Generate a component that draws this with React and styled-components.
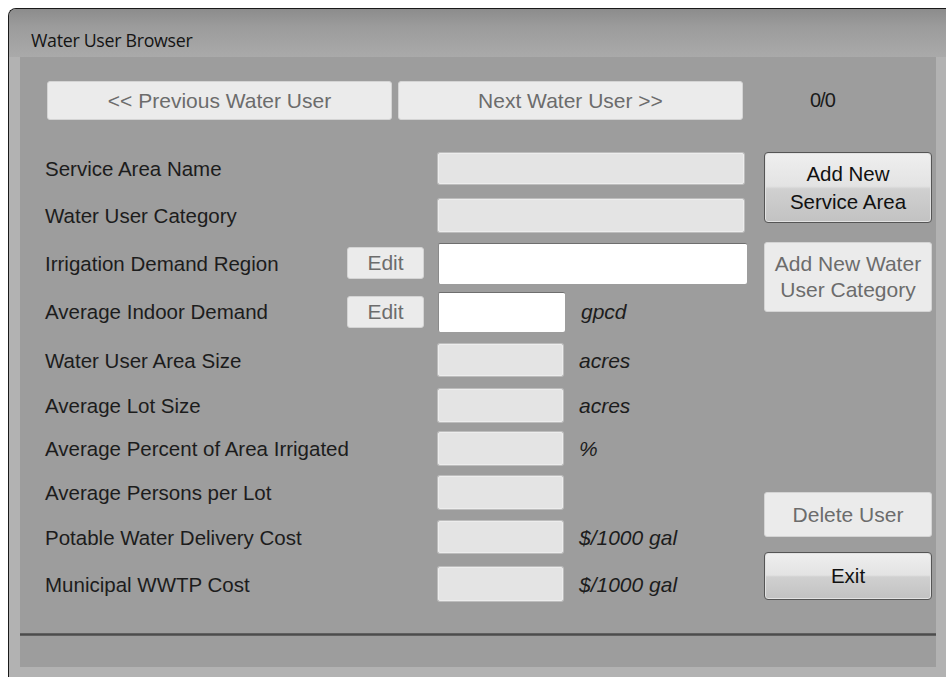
import React from "react";
import styled, { createGlobalStyle, css } from "styled-components";

const GlobalStyle = createGlobalStyle`
	html, body {
		margin: 0;
		padding: 0;
		background: #ffffff;
		overflow: hidden;
	}
	body {
		font-family: "Liberation Sans", Arial, sans-serif;
	}
`;

const Page = styled.div`
	padding: 8px 0 0 8px;
	height: 677px;
	box-sizing: border-box;
`;

// outer window chrome, cut off by the right and bottom edges
const Window = styled.div`
	width: 950px;
	height: 680px;
	box-sizing: border-box;
	border-top: 1px solid #1a1a1a;
	border-left: 1px solid #1a1a1a;
	border-top-left-radius: 8px;
	background: #b2b2b2;
	display: flex;
	flex-direction: column;
	overflow: hidden;
`;

const TitleBar = styled.div`
	height: 48px;
	flex-shrink: 0;
	display: flex;
	align-items: center;
	padding: 13px 0 0 22px;
	box-sizing: border-box;
	background: linear-gradient(#8c8c8c 0%, #9b9b9b 35%, #aaaaaa 100%);
	font-family: "Open Sans", "Noto Sans", sans-serif;
	font-size: 17.8px;
	color: #141414;
	letter-spacing: -0.3px;
`;

const Frame = styled.div`
	padding-left: 11px;
	display: flex;
	flex-direction: column;
`;

const Panel = styled.div`
	background: #9d9d9d;
	width: 916px;
	height: 610px;
	display: flex;
	flex-direction: column;
	padding: 24px 0 0 25px;
	box-sizing: border-box;
`;

const NavRow = styled.div`
	display: flex;
	align-items: center;
	margin-left: 2px;
	height: 39px;
`;

const buttonBase = css`
	box-sizing: border-box;
	font-family: "Liberation Sans", Arial, sans-serif;
	display: flex;
	align-items: center;
	justify-content: center;
	text-align: center;
	padding: 0;
`;

const FlatButton = styled.button`
	${buttonBase}
	width: ${(p) => p.$w}px;
	height: ${(p) => p.$h}px;
	font-size: 21px;
	line-height: 26px;
	background: #ebebeb;
	border: 1px solid #d4d4d4;
	border-radius: 3px;
	color: #6c6c6c;
	margin-right: ${(p) => p.$mr || 0}px;
`;

const RaisedButton = styled.button`
	${buttonBase}
	width: 168px;
	height: ${(p) => p.$h}px;
	font-size: 20.5px;
	line-height: 28px;
	border: 1px solid #555555;
	border-radius: 4px;
	color: #111111;
	background: linear-gradient(
		#efefef 0%,
		#e3e3e3 48%,
		#d0d0d0 52%,
		#c2c2c2 100%
	);
	box-shadow: inset 0 0 0 1px #e2e2e2;
`;

const Counter = styled.span`
	margin-left: 67px;
	font-size: 20px;
	color: #1a1a1a;
	letter-spacing: -1px;
`;

const Body = styled.div`
	display: flex;
	margin-top: 25px;
`;

const Form = styled.div`
	width: 719px;
	display: flex;
	flex-direction: column;
`;

const Row = styled.div`
	display: flex;
	align-items: center;
	height: ${(p) => p.$h}px;
`;

const Label = styled.div`
	width: 302px;
	font-size: 20.5px;
	color: #1c1c1c;
	padding-top: 1px;
	white-space: nowrap;
`;

const EditSlot = styled.div`
	width: 77px;
	margin-right: 14px;
	display: flex;
`;

const Field = styled.div`
	box-sizing: border-box;
	width: ${(p) => p.$w}px;
	height: ${(p) => p.$h}px;
	border-radius: 2px;
	${(p) =>
		p.$white
			? css`
					background: #ffffff;
					border-top: 1px solid #6e6e6e;
					border-left: 1px solid #8a8a8a;
			  `
			: css`
					background: #e4e4e4;
					border: 1px solid #ededed;
					box-shadow: 0 0 0 1px #bdbdbd;
			  `}
`;

const Unit = styled.span`
	margin-left: 16px;
	font-style: italic;
	font-size: 21px;
	color: #1c1c1c;
	padding-top: 1px;
`;

const Side = styled.div`
	width: 168px;
	display: flex;
	flex-direction: column;
	padding: 7px 0 8px;
	box-sizing: border-box;
`;

const Spacer = styled.div`
	flex: 1;
`;

const Separator = styled.div`
	margin: 25px 0 0 -25px;
	height: 3px;
	background: linear-gradient(#6a6a6a, #4c4c4c, #6a6a6a);
`;

const rows = [
	{ label: "Service Area Name", h: 47, field: { w: 306, h: 31 } },
	{ label: "Water User Category", h: 47, field: { w: 306, h: 33 } },
	{ label: "Irrigation Demand Region", h: 48, edit: true, field: { w: 309, h: 41, white: true } },
	{ label: "Average Indoor Demand", h: 49, edit: true, field: { w: 127, h: 40, white: true }, unit: "gpcd" },
	{ label: "Water User Area Size", h: 48, field: { w: 125, h: 32 }, unit: "acres" },
	{ label: "Average Lot Size", h: 43, field: { w: 125, h: 33 }, unit: "acres" },
	{ label: "Average Percent of Area Irrigated", h: 43, field: { w: 125, h: 33 }, unit: "%" },
	{ label: "Average Persons per Lot", h: 44, field: { w: 125, h: 33 } },
	{ label: "Potable Water Delivery Cost", h: 46, field: { w: 125, h: 32 }, unit: "$/1000 gal" },
	{ label: "Municipal WWTP Cost", h: 48, field: { w: 125, h: 34 }, unit: "$/1000 gal" },
];

const App = () => {
	return (
		<Page>
			<GlobalStyle />
			<Window>
				<TitleBar>Water User Browser</TitleBar>
				<Frame>
					<Panel>
						<NavRow>
							<FlatButton $w={345} $h={39} $mr={6}>
								{"<< Previous Water User"}
							</FlatButton>
							<FlatButton $w={345} $h={39}>
								{"Next Water User >>"}
							</FlatButton>
							<Counter>0/0</Counter>
						</NavRow>
						<Body>
							<Form>
								{rows.map((r) => (
									<Row key={r.label} $h={r.h}>
										<Label>{r.label}</Label>
										<EditSlot>
											{r.edit && (
												<FlatButton $w={77} $h={32}>
													Edit
												</FlatButton>
											)}
										</EditSlot>
										<Field
											$w={r.field.w}
											$h={r.field.h}
											$white={r.field.white}
										/>
										{r.unit && <Unit>{r.unit}</Unit>}
									</Row>
								))}
							</Form>
							<Side>
								<RaisedButton $h={71}>
									Add New
									<br />
									Service Area
								</RaisedButton>
								<FlatButton $w={168} $h={70} style={{ marginTop: 19 }}>
									Add New Water
									<br />
									User Category
								</FlatButton>
								<Spacer />
								<FlatButton $w={168} $h={45}>
									Delete User
								</FlatButton>
								<RaisedButton $h={48} style={{ marginTop: 15 }}>
									Exit
								</RaisedButton>
							</Side>
						</Body>
						<Separator />
					</Panel>
				</Frame>
			</Window>
		</Page>
	);
};

export default App;
